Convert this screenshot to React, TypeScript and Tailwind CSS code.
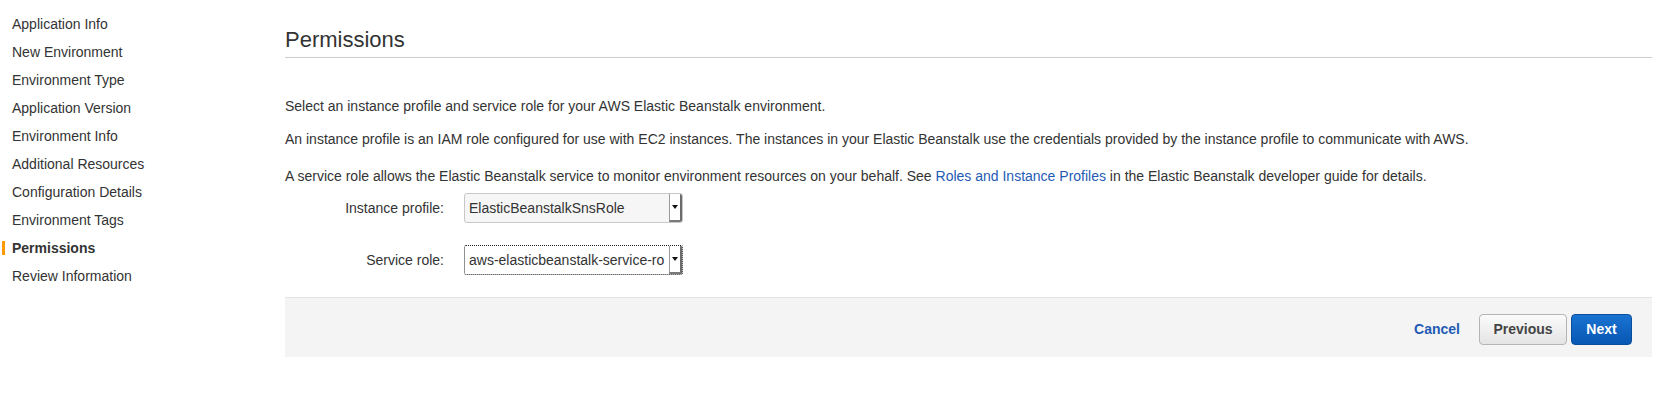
import React from "react";

const items = [
  "Application Info",
  "New Environment",
  "Environment Type",
  "Application Version",
  "Environment Info",
  "Additional Resources",
  "Configuration Details",
  "Environment Tags",
  "Permissions",
  "Review Information",
];

function Arrow() {
  return (
    <div className="flex w-[13px] shrink-0 items-center justify-center border-l border-l-[#9a9a9a] border-r-2 border-r-[#6b6b6b] border-b-2 border-b-[#7a7a7a] bg-white">
      <svg width="6" height="4" viewBox="0 0 6 4">
        <path d="M0 0 L6 0 L3 4 Z" fill="#111" />
      </svg>
    </div>
  );
}

export default function App() {
  return (
    <div
      className="flex min-h-[402px] w-full bg-white text-[14px] text-[#333]"
      style={{ fontFamily: '"Liberation Sans", Arial, Helvetica, sans-serif' }}
    >
      <aside className="w-[285px] shrink-0 pt-[10px]">
        <ul>
          {items.map((it) => {
            const active = it === "Permissions";
            return (
              <li key={it} className="relative h-[28px] pl-[12px] leading-[28px]">
                {active && (
                  <span className="absolute left-[2px] top-[7px] h-[14px] w-[3px] bg-[#f90]" />
                )}
                <span className={active ? "font-bold text-[#333]" : "text-[#333]"}>{it}</span>
              </li>
            );
          })}
        </ul>
      </aside>
      <main className="mr-[21px] flex-1 pt-[25px]">
        <h1 className="border-b border-[#cccccc] pb-[2px] text-[22px] leading-[30px] text-[#333]">
          Permissions
        </h1>
        <div className="pt-[38px]">
          <p className="mb-[13px] leading-[20px]">
            Select an instance profile and service role for your AWS Elastic Beanstalk environment.
          </p>
          <p className="mb-[17px] leading-[20px]">
            An instance profile is an IAM role configured for use with EC2 instances. The instances in
            your Elastic Beanstalk use the credentials provided by the instance profile to communicate
            with AWS.
          </p>
          <p className="leading-[20px]">
            A service role allows the Elastic Beanstalk service to monitor environment resources on
            your behalf. See <span className="text-[#1f5bb5]">Roles and Instance Profiles</span> in the
            Elastic Beanstalk developer guide for details.
          </p>
        </div>
        <div className="mt-[7px] flex flex-col gap-[22px]">
          <div className="flex items-center">
            <label className="w-[159px] text-right">Instance profile:</label>
            <div className="ml-[20px] flex h-[30px] w-[219px] overflow-hidden rounded-[3px] border border-[#c8c8c8] bg-[#f6f6f6]">
              <div className="flex-1 overflow-hidden whitespace-nowrap pl-[4px] leading-[28px] text-[#333]">
                ElasticBeanstalkSnsRole
              </div>
              <Arrow />
            </div>
          </div>
          <div className="flex items-center">
            <label className="w-[159px] text-right">Service role:</label>
            <div className="ml-[20px] flex h-[30px] w-[219px] overflow-hidden rounded-[2px] border border-dotted border-[#222] bg-white">
              <div className="flex-1 overflow-hidden whitespace-nowrap pl-[4px] leading-[28px] text-[#333]">
                aws-elasticbeanstalk-service-ro
              </div>
              <Arrow />
            </div>
          </div>
        </div>
        <div className="mt-[22px] flex items-center justify-end border-t border-[#e3e3e3] bg-[#f4f4f4] px-[20px] pb-[12px] pt-[16px]">
          <span className="mr-[19px] font-bold text-[#1f5bb5]">Cancel</span>
          <button className="h-[31px] w-[88px] rounded-[4px] border border-[#b5b5b5] bg-gradient-to-b from-[#fbfbfb] to-[#e4e4e4] font-bold text-[#444]">
            Previous
          </button>
          <button className="ml-[4px] h-[31px] w-[61px] rounded-[4px] border border-[#0a4f9e] bg-gradient-to-b from-[#1a73d1] to-[#0757b3] font-bold text-white">
            Next
          </button>
        </div>
      </main>
    </div>
  );
}
